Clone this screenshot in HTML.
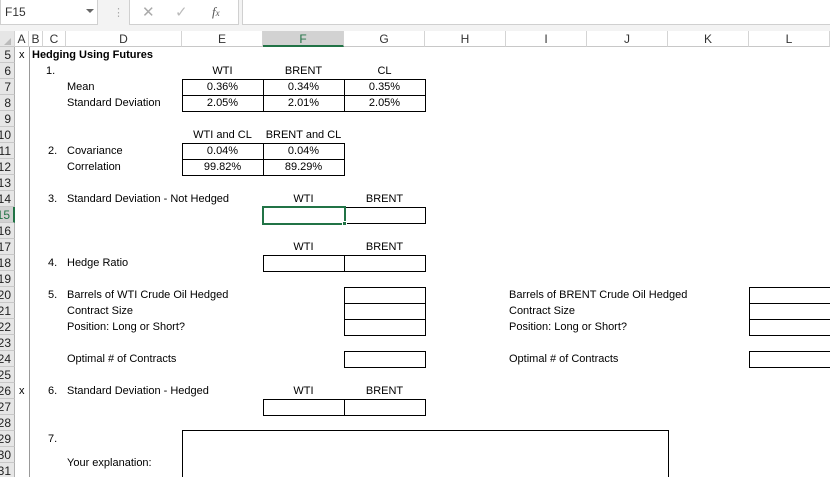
<!DOCTYPE html>
<html style="overflow:hidden;width:830px;height:477px"><head><meta charset="utf-8"><style>
*{margin:0;padding:0;box-sizing:border-box}
body{width:830px;height:477px;overflow:hidden;background:#fff;font-family:"Liberation Sans",sans-serif;font-size:11px;color:#000;position:relative}
.a{position:absolute;white-space:nowrap}
.t{position:absolute;white-space:nowrap;height:16px;line-height:16px}
.c{text-align:center}
.b{position:absolute;border:1px solid #000}
.h{position:absolute;border-left:1px solid #000;width:0}
.v{position:absolute;border-top:1px solid #000;height:0}
.rh{position:absolute;left:0;width:15px;height:16px;line-height:16px;background:#e6e6e6;border-bottom:1px solid #c8c8c8;border-right:1px solid #b0b0b0;font-size:12px;overflow:hidden;color:#222}
.rh span{position:absolute;right:3px;top:0}
.ch{position:absolute;top:31px;height:16px;line-height:16px;text-align:center;font-size:12px;color:#333;border-right:1px solid #d4d4d4;background:#fff;border-bottom:1px solid #c8c8c8}
</style></head><body>
<div class="a" style="left:0;top:0;width:830px;height:31px;background:#f3f3f3"></div>
<div class="a" style="left:0;top:0;width:98px;height:25px;background:#fff;border:1px solid #d0d0d0;border-top:none;line-height:25px;padding-left:4px;font-size:12px;color:#333">F15</div>
<div class="a" style="left:86px;top:9px;width:0;height:0;border-left:4px solid transparent;border-right:4px solid transparent;border-top:4px solid #666"></div>
<div class="a" style="left:113px;top:6px;color:#aaa;font-size:11px">⋮</div>
<div class="a" style="left:129px;top:0;width:110px;height:25px;background:#fff;border:1px solid #d0d0d0;border-top:none"></div>
<div class="a" style="left:142px;top:3px;color:#aaa;font-size:15px">✕</div>
<div class="a" style="left:175px;top:3px;color:#bbb;font-size:15px">✓</div>
<div class="a" style="left:212px;top:4px;color:#555;font-size:13px;font-style:italic;font-family:'Liberation Serif',serif">f<span style="font-size:9px">x</span></div>
<div class="a" style="left:242px;top:0;width:590px;height:25px;background:#fff;border:1px solid #d0d0d0;border-top:none"></div>

<div class="ch" style="left:0;width:15px;background:#e6e6e6"></div>
<div class="a" style="left:4px;top:38px;width:0;height:0;border-left:7px solid transparent;border-bottom:7px solid #bbb"></div>
<div class="ch" style="left:15px;width:14px">A</div>
<div class="ch" style="left:29px;width:14px">B</div>
<div class="ch" style="left:43px;width:23px">C</div>
<div class="ch" style="left:66px;width:116px">D</div>
<div class="ch" style="left:182px;width:81px">E</div>
<div class="ch" style="left:263px;width:81px;background:#d2d2d2;border-bottom:2px solid #217346;color:#217346">F</div>
<div class="ch" style="left:344px;width:81px">G</div>
<div class="ch" style="left:425px;width:81px">H</div>
<div class="ch" style="left:506px;width:81px">I</div>
<div class="ch" style="left:587px;width:81px">J</div>
<div class="ch" style="left:668px;width:81px">K</div>
<div class="ch" style="left:749px;width:81px">L</div>

<div class="rh" style="top:47px"><span>5</span></div><div class="rh" style="top:63px"><span>6</span></div><div class="rh" style="top:79px"><span>7</span></div><div class="rh" style="top:95px"><span>8</span></div><div class="rh" style="top:111px"><span>9</span></div><div class="rh" style="top:127px"><span>10</span></div><div class="rh" style="top:143px"><span>11</span></div><div class="rh" style="top:159px"><span>12</span></div><div class="rh" style="top:175px"><span>13</span></div><div class="rh" style="top:191px"><span>14</span></div><div class="rh" style="top:207px;background:#d2d2d2;border-right:2px solid #217346;color:#217346"><span>15</span></div><div class="rh" style="top:223px"><span>16</span></div><div class="rh" style="top:239px"><span>17</span></div><div class="rh" style="top:255px"><span>18</span></div><div class="rh" style="top:271px"><span>19</span></div><div class="rh" style="top:287px"><span>20</span></div><div class="rh" style="top:303px"><span>21</span></div><div class="rh" style="top:319px"><span>22</span></div><div class="rh" style="top:335px"><span>23</span></div><div class="rh" style="top:351px"><span>24</span></div><div class="rh" style="top:367px"><span>25</span></div><div class="rh" style="top:383px"><span>26</span></div><div class="rh" style="top:399px"><span>27</span></div><div class="rh" style="top:415px"><span>28</span></div><div class="rh" style="top:431px"><span>29</span></div><div class="rh" style="top:447px"><span>30</span></div><div class="rh" style="top:463px"><span>31</span></div>
<div class="a" style="left:29px;top:47px;width:1px;height:430px;background:#999"></div>

<div class="t" style="left:19px;top:47px">x</div>
<div class="t" style="left:32px;top:47px;font-weight:bold">Hedging Using Futures</div>
<div class="t" style="left:46px;top:63px">1.</div>
<div class="t c" style="left:182px;top:63px;width:81px">WTI</div>
<div class="t c" style="left:263px;top:63px;width:81px">BRENT</div>
<div class="t c" style="left:344px;top:63px;width:81px">CL</div>
<div class="t" style="left:67px;top:79px">Mean</div>
<div class="t" style="left:67px;top:95px">Standard Deviation</div>
<div class="b" style="left:182px;top:79px;width:244px;height:33px"></div>
<div class="h" style="left:263px;top:79px;height:33px"></div><div class="h" style="left:344px;top:79px;height:33px"></div>
<div class="v" style="left:182px;top:95px;width:244px"></div>
<div class="t c" style="left:182px;top:79px;width:81px">0.36%</div><div class="t c" style="left:263px;top:79px;width:81px">0.34%</div><div class="t c" style="left:344px;top:79px;width:81px">0.35%</div>
<div class="t c" style="left:182px;top:95px;width:81px">2.05%</div><div class="t c" style="left:263px;top:95px;width:81px">2.01%</div><div class="t c" style="left:344px;top:95px;width:81px">2.05%</div>

<div class="t c" style="left:182px;top:127px;width:81px">WTI and CL</div>
<div class="t c" style="left:263px;top:127px;width:81px">BRENT and CL</div>
<div class="t" style="left:48px;top:143px">2.</div>
<div class="t" style="left:67px;top:143px">Covariance</div>
<div class="t" style="left:67px;top:159px">Correlation</div>
<div class="b" style="left:182px;top:143px;width:163px;height:33px"></div>
<div class="h" style="left:263px;top:143px;height:33px"></div>
<div class="v" style="left:182px;top:159px;width:163px"></div>
<div class="t c" style="left:182px;top:143px;width:81px">0.04%</div><div class="t c" style="left:263px;top:143px;width:81px">0.04%</div>
<div class="t c" style="left:182px;top:159px;width:81px">99.82%</div><div class="t c" style="left:263px;top:159px;width:81px">89.29%</div>

<div class="t" style="left:48px;top:191px">3.</div>
<div class="t" style="left:67px;top:191px">Standard Deviation - Not Hedged</div>
<div class="t c" style="left:263px;top:191px;width:81px">WTI</div><div class="t c" style="left:344px;top:191px;width:81px">BRENT</div>
<div class="b" style="left:263px;top:207px;width:163px;height:17px"></div>
<div class="a" style="left:262px;top:206px;width:84px;height:19px;border:2px solid #217346"></div>
<div class="a" style="left:342px;top:221px;width:5px;height:5px;background:#217346;border:1px solid #fff"></div>

<div class="t c" style="left:263px;top:239px;width:81px">WTI</div><div class="t c" style="left:344px;top:239px;width:81px">BRENT</div>
<div class="t" style="left:48px;top:255px">4.</div>
<div class="t" style="left:67px;top:255px">Hedge Ratio</div>
<div class="b" style="left:263px;top:255px;width:163px;height:17px"></div><div class="h" style="left:344px;top:255px;height:17px"></div>

<div class="t" style="left:48px;top:287px">5.</div>
<div class="t" style="left:67px;top:287px">Barrels of WTI Crude Oil Hedged</div>
<div class="t" style="left:67px;top:303px">Contract Size</div>
<div class="t" style="left:67px;top:319px">Position: Long or Short?</div>
<div class="t" style="left:67px;top:351px">Optimal # of Contracts</div>
<div class="b" style="left:344px;top:287px;width:82px;height:49px"></div>
<div class="v" style="left:344px;top:303px;width:82px"></div><div class="v" style="left:344px;top:319px;width:82px"></div>
<div class="b" style="left:344px;top:351px;width:82px;height:17px"></div>
<div class="t" style="left:509px;top:287px">Barrels of BRENT Crude Oil Hedged</div>
<div class="t" style="left:509px;top:303px">Contract Size</div>
<div class="t" style="left:509px;top:319px">Position: Long or Short?</div>
<div class="t" style="left:509px;top:351px">Optimal # of Contracts</div>
<div class="b" style="left:749px;top:287px;width:90px;height:49px"></div>
<div class="v" style="left:749px;top:303px;width:90px"></div><div class="v" style="left:749px;top:319px;width:90px"></div>
<div class="b" style="left:749px;top:351px;width:90px;height:17px"></div>

<div class="t" style="left:19px;top:383px">x</div>
<div class="t" style="left:48px;top:383px">6.</div>
<div class="t" style="left:67px;top:383px">Standard Deviation - Hedged</div>
<div class="t c" style="left:263px;top:383px;width:81px">WTI</div><div class="t c" style="left:344px;top:383px;width:81px">BRENT</div>
<div class="b" style="left:263px;top:399px;width:163px;height:17px"></div><div class="h" style="left:344px;top:399px;height:17px"></div>

<div class="t" style="left:48px;top:431px">7.</div>
<div class="t" style="left:67px;top:455px">Your explanation:</div>
<div class="a" style="left:182px;top:430px;width:487px;height:47px;border:1px solid #000;border-bottom:none"></div>
</body></html>
